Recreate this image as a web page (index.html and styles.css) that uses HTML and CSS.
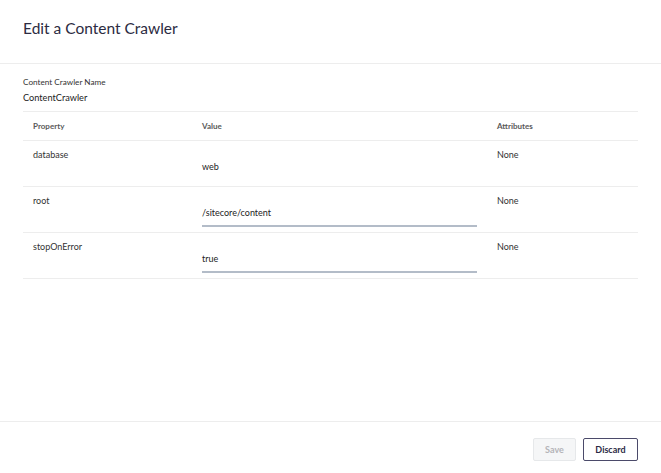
FILE: index.html
```html
<!DOCTYPE html>
<html>
<head>
<meta charset="utf-8">
<link rel="stylesheet" href="styles.css">
</head>
<body>
<div class="page">
  <header class="header">
    <h1 class="title">Edit a Content Crawler</h1>
  </header>
  <main class="content">
    <div class="name-block">
      <div class="name-label">Content Crawler Name</div>
      <div class="name-value">ContentCrawler</div>
    </div>
    <div class="table">
      <div class="row head">
        <div class="cell">Property</div>
        <div class="cell">Value</div>
        <div class="cell">Attributes</div>
      </div>
      <div class="row">
        <div class="cell">database</div>
        <div class="cell value"><div class="field plain">web</div></div>
        <div class="cell">None</div>
      </div>
      <div class="row">
        <div class="cell">root</div>
        <div class="cell value"><div class="field">/sitecore/content</div></div>
        <div class="cell">None</div>
      </div>
      <div class="row">
        <div class="cell">stopOnError</div>
        <div class="cell value"><div class="field">true</div></div>
        <div class="cell">None</div>
      </div>
    </div>
  </main>
  <footer class="footer">
    <button class="btn save">Save</button>
    <button class="btn discard">Discard</button>
  </footer>
</div>
</body>
</html>
```

FILE: styles.css
```css
* { box-sizing: border-box; }
html, body { margin: 0; padding: 0; }
body {
  font-family: Lato, "Open Sans", sans-serif;
  color: #333333;
  background: #ffffff;
}
.page {
  width: 661px;
  height: 473px;
  display: flex;
  flex-direction: column;
}
.header {
  height: 64px;
  border-bottom: 1px solid #ededed;
  padding: 19px 23px 0;
}
.title {
  margin: 0;
  font-size: 15.5px;
  line-height: 18px;
  font-weight: 400;
  color: #2c2b42;
}
.content {
  flex: 1;
  padding: 0 23px;
}
.name-block {
  padding-top: 12px;
  padding-bottom: 7px;
  border-bottom: 1px solid #ededed;
}
.name-label {
  font-size: 8.2px;
  line-height: 12px;
  color: #333;
}
.name-value {
  margin-top: 4px;
  font-size: 9.2px;
  line-height: 12px;
  color: #222;
}
.table { display: flex; flex-direction: column; }
.row {
  display: grid;
  grid-template-columns: 169px 295px 1fr;
  height: 46px;
  border-bottom: 1px solid #ededed;
  font-size: 9px;
  line-height: 12px;
}
.row.head {
  height: 29px;
  align-items: center;
}
.row.head .cell {
  padding-top: 0;
  font-size: 8px;
  font-weight: 700;
  color: #5a5a5a;
}
.cell {
  padding: 8px 10px 0;
}
.cell.value { padding-top: 17px; }
.field {
  height: 23px;
  line-height: 18px;
  border-bottom: 2px solid #b3bcc8;
  color: #222;
}
.field.plain { border-bottom-color: transparent; }
.footer {
  height: 52px;
  border-top: 1px solid #ededed;
  padding: 16px 23px 0;
  display: flex;
  justify-content: flex-end;
  align-items: flex-start;
  gap: 7px;
}
.btn {
  height: 23px;
  font-family: Lato, "Open Sans", sans-serif;
  font-size: 9px;
  font-weight: 700;
  border-radius: 2px;
  padding: 0;
}
.save {
  width: 43px;
  background: #f5f6f7;
  border: 1px solid #e6e8ea;
  color: #b4b4b8;
}
.discard {
  width: 55px;
  background: #ffffff;
  border: 1.5px solid #4b4a6a;
  color: #2b2a45;
}
```
